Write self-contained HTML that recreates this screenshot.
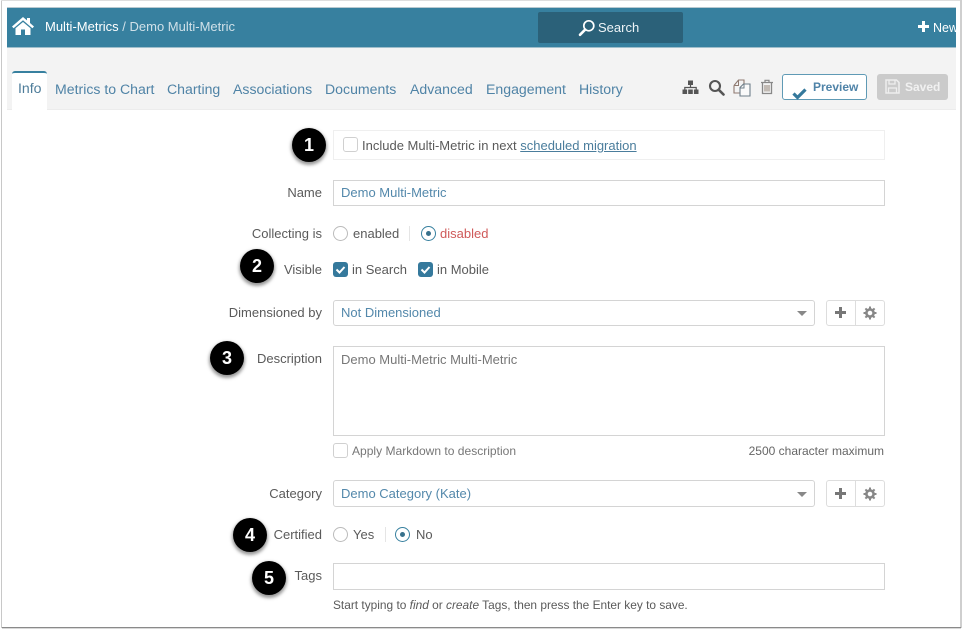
<!DOCTYPE html>
<html><head><meta charset="utf-8">
<style>
html,body{margin:0;padding:0;width:963px;height:630px;overflow:hidden;background:#fff;font-family:"Liberation Sans",sans-serif;}
.a{position:absolute;white-space:nowrap;}
.l{position:absolute;white-space:nowrap;font-size:13px;color:#5a5a5a;line-height:16px;right:641px;text-align:right;}
.t{position:absolute;white-space:nowrap;font-size:14.1px;color:#4f83a6;line-height:18px;top:80px;}
.box{position:absolute;box-sizing:border-box;border:1px solid #d4d4d4;background:#fff;}
.val{position:absolute;white-space:nowrap;font-size:13px;line-height:16px;color:#5388ab;}
.txt{position:absolute;white-space:nowrap;font-size:13px;line-height:16px;color:#5a5a5a;}
.cb{position:absolute;box-sizing:border-box;width:15px;height:15px;border:1px solid #d0d0d0;border-radius:3px;background:#fff;}
.cc{position:absolute;width:15px;height:15px;border-radius:3px;background:#35799c;}
.r{position:absolute;box-sizing:border-box;width:15px;height:15px;border:1px solid #bbb;border-radius:50%;background:#fff;}
.rs{position:absolute;box-sizing:border-box;width:15px;height:15px;border:1.5px solid #37809f;border-radius:50%;background:#fff;}
.rs:after{content:"";position:absolute;left:3.5px;top:3.5px;width:5px;height:5px;border-radius:50%;background:#37718c;}
.n{position:absolute;width:34px;height:34px;border-radius:50%;background:#000;color:#fff;font-size:18px;font-weight:700;line-height:34px;text-align:center;box-shadow:0 2px 3px 1px rgba(70,70,70,.55),0 0 0 1px #fff;}
.btn{position:absolute;box-sizing:border-box;width:59px;height:26px;border:1px solid #ddd;border-radius:3px;background:#fff;}
.btn:after{content:"";position:absolute;left:28px;top:0;width:1px;height:100%;background:#ddd;}
</style></head><body>

<!-- frame -->
<div class="a" style="left:1px;top:0;width:1px;height:628px;background:#c8c8c8;"></div>
<div class="a" style="left:1px;top:0;width:960px;height:1px;background:#dedede;"></div>
<div class="a" style="left:960px;top:0;width:2px;height:628px;background:#cfcfcf;"></div>
<div class="a" style="left:2px;top:627px;width:959px;height:1px;background:#8a8a8a;"></div>
<div class="a" style="left:2px;top:628px;width:959px;height:1px;background:#d8d8d8;"></div>

<!-- header -->
<div class="a" style="left:7px;top:7px;width:949px;height:1px;background:#b9c9d0;"></div>
<div class="a" style="left:7px;top:8px;width:949px;height:39px;background:#37809f;"></div>
<div class="a" style="left:7px;top:47px;width:949px;height:63px;background:#f3f3f3;border-top:1px solid #9fbecb;box-sizing:border-box;"></div>
<div class="a" style="left:7px;top:109px;width:949px;height:1px;background:#ececec;"></div>

<svg class="a" style="left:11px;top:16px" width="24" height="20" viewBox="0 0 24 20"><path d="M12 1 L1 10.5 L2.6 12.3 L12 4.2 L21.4 12.3 L23 10.5 L19 7 V2 H16 V4.4 Z" fill="#fff"/><path d="M4.5 12.2 L12 6 L19.5 12.2 V19 H14 V13.5 H10 V19 H4.5 Z" fill="#fff"/></svg>
<div class="a" style="left:45px;top:19px;font-size:13px;line-height:16px;color:#fff;">Multi-Metrics <span style="color:#cfe0e8">/ Demo Multi-Metric</span></div>

<div class="a" style="left:538px;top:12px;width:145px;height:31px;background:#2b6179;border-radius:2px;"></div>
<svg class="a" style="left:578px;top:19px" width="18" height="18" viewBox="0 0 18 18"><circle cx="10.8" cy="6.8" r="5" fill="none" stroke="#fff" stroke-width="1.7"/><path d="M7.2 10.6 L2 15.8" stroke="#fff" stroke-width="2.6" stroke-linecap="round"/></svg>
<div class="a" style="left:598px;top:20px;font-size:13px;line-height:16px;color:#eef4f7;">Search</div>

<svg class="a" style="left:917px;top:20px" width="13" height="13" viewBox="0 0 13 13"><path d="M6.5 1v11M1 6.5h11" stroke="#fff" stroke-width="3"/></svg>
<div class="a" style="left:933px;top:20px;width:23px;overflow:hidden;font-size:12.5px;line-height:16px;color:#fff;">New</div>

<!-- tabs -->
<div class="a" style="left:12px;top:71px;width:35px;height:39px;background:#fff;border-top:2px solid #37809f;border-radius:3px 3px 0 0;box-sizing:border-box;"></div>
<div class="t" style="left:18px;top:79px;color:#4e7d9a;">Info</div>
<div class="t" style="left:55px;">Metrics to Chart</div>
<div class="t" style="left:167px;">Charting</div>
<div class="t" style="left:233px;">Associations</div>
<div class="t" style="left:325px;">Documents</div>
<div class="t" style="left:410px;">Advanced</div>
<div class="t" style="left:486px;">Engagement</div>
<div class="t" style="left:579px;">History</div>

<!-- toolbar icons -->
<svg class="a" style="left:682px;top:80px" width="17" height="15" viewBox="0 0 17 15"><rect x="6" y="0.5" width="5" height="4.5" fill="#555"/><path d="M8.5 5v3M2.8 10V7.5h11.4V10" fill="none" stroke="#555" stroke-width="1.2"/><rect x="0.5" y="9.5" width="4.6" height="4.5" fill="#555"/><rect x="6.2" y="9.5" width="4.6" height="4.5" fill="#555"/><rect x="11.9" y="9.5" width="4.6" height="4.5" fill="#555"/></svg>
<svg class="a" style="left:708px;top:79px" width="17" height="17" viewBox="0 0 17 17"><circle cx="7" cy="7" r="5" fill="none" stroke="#555" stroke-width="2.1"/><path d="M10.8 10.8 L15.5 15.5" stroke="#555" stroke-width="2.6" stroke-linecap="round"/></svg>
<svg class="a" style="left:733px;top:79px" width="18" height="18" viewBox="0 0 18 18"><path d="M1 6.5 L5.5 1 H11 V5" fill="none" stroke="#8f7a70" stroke-width="1.1"/><path d="M1 6.5 V14 H7" fill="none" stroke="#8f7a70" stroke-width="1.1"/><path d="M1 6.5 H5.5 V1" fill="none" stroke="#8f7a70" stroke-width="1"/><path d="M7 8.5 L10.5 5 H17 V17 H7 Z" fill="#fafafa" stroke="#6f7f8a" stroke-width="1.1"/><path d="M7 9 H11 V5.3" fill="none" stroke="#6f7f8a" stroke-width="1"/></svg>
<svg class="a" style="left:760px;top:79px" width="14" height="16" viewBox="0 0 14 16"><path d="M1 3.5 H13 M5 3 V1.3 H9 V3" fill="none" stroke="#888" stroke-width="1.2"/><path d="M2.5 3.5 V14.5 H11.5 V3.5" fill="none" stroke="#888" stroke-width="1.3"/><path d="M5 6 V12.5 M7 6 V12.5 M9 6 V12.5" stroke="#9a8d80" stroke-width="1.1"/></svg>

<div class="a" style="left:782px;top:74px;width:85px;height:26px;box-sizing:border-box;border:1px solid #5f9ab5;border-radius:3px;background:#fff;"></div>
<svg class="a" style="left:792px;top:87px" width="15" height="13" viewBox="0 0 15 13"><path d="M1.5 6.5 L5.5 10.5 L13.5 2.5" fill="none" stroke="#35799c" stroke-width="3.2"/></svg>
<div class="a" style="left:813px;top:79px;font-size:12px;font-weight:700;line-height:16px;color:#4f83a8;">Preview</div>

<div class="a" style="left:877px;top:74px;width:71px;height:26px;background:#cbcbcb;border-radius:3px;"></div>
<svg class="a" style="left:885px;top:79px" width="15" height="15" viewBox="0 0 15 15"><path d="M1 1 H11.5 L14 3.5 V14 H1 Z" fill="none" stroke="#eee" stroke-width="1.5"/><path d="M4 1.5 V5 H10 V1.5 M3.5 14 V9 H11.5 V14" fill="none" stroke="#eee" stroke-width="1.3"/></svg>
<div class="a" style="left:905px;top:79px;font-size:12px;font-weight:700;line-height:16px;color:#f1f1f1;">Saved</div>

<!-- row 1 -->
<div class="box" style="left:333px;top:130px;width:552px;height:30px;border-color:#efefef;"></div>
<div class="cb" style="left:343px;top:137px;"></div>
<div class="txt" style="left:362px;top:138px;">Include Multi-Metric in next <span style="color:#4a7d9c;text-decoration:underline;">scheduled migration</span></div>

<!-- name -->
<div class="l" style="top:185px;">Name</div>
<div class="box" style="left:333px;top:180px;width:552px;height:26px;"></div>
<div class="val" style="left:341px;top:185px;">Demo Multi-Metric</div>

<!-- collecting -->
<div class="l" style="top:226px;">Collecting is</div>
<div class="r" style="left:333px;top:226px;"></div>
<div class="txt" style="left:353px;top:226px;">enabled</div>
<div class="a" style="left:409px;top:226px;width:1px;height:15px;background:#e5e5e5;"></div>
<div class="rs" style="left:421px;top:226px;"></div>
<div class="txt" style="left:440px;top:226px;color:#cf5a5a;">disabled</div>

<!-- visible -->
<div class="l" style="top:262px;">Visible</div>
<div class="cc" style="left:333px;top:262px;"></div>
<svg class="a" style="left:333px;top:262px" width="15" height="15" viewBox="0 0 15 15"><path d="M3.5 7.5 L6.5 10.5 L11.5 5" fill="none" stroke="#fff" stroke-width="2"/></svg>
<div class="txt" style="left:352px;top:262px;">in Search</div>
<div class="cc" style="left:418px;top:262px;"></div>
<svg class="a" style="left:418px;top:262px" width="15" height="15" viewBox="0 0 15 15"><path d="M3.5 7.5 L6.5 10.5 L11.5 5" fill="none" stroke="#fff" stroke-width="2"/></svg>
<div class="txt" style="left:437px;top:262px;">in Mobile</div>

<!-- dimensioned -->
<div class="l" style="top:305px;">Dimensioned by</div>
<div class="box" style="left:333px;top:300px;width:482px;height:26px;border-radius:3px;"></div>
<div class="val" style="left:341px;top:305px;">Not Dimensioned</div>
<div class="a" style="left:797px;top:311px;width:0;height:0;border-left:5px solid transparent;border-right:5px solid transparent;border-top:5px solid #888;"></div>
<div class="btn" style="left:826px;top:300px;"></div>
<svg class="a" style="left:834px;top:306px" width="13" height="13" viewBox="0 0 13 13"><path d="M6.5 1v11M1 6.5h11" stroke="#777" stroke-width="3"/></svg>
<svg class="a" style="left:863px;top:306px" width="14" height="14" viewBox="0 0 14 14"><circle cx="7" cy="7" r="3.6" fill="none" stroke="#888" stroke-width="2.6"/><path d="M7 .5v3M7 10.5v3M.5 7h3M10.5 7h3M2.4 2.4l2.1 2.1M9.5 9.5l2.1 2.1M2.4 11.6l2.1-2.1M9.5 4.5l2.1-2.1" stroke="#888" stroke-width="2"/></svg>

<!-- description -->
<div class="l" style="top:351px;">Description</div>
<div class="box" style="left:333px;top:346px;width:552px;height:90px;"></div>
<div class="txt" style="left:341px;top:352px;color:#777;">Demo Multi-Metric Multi-Metric</div>
<div class="cb" style="left:333px;top:443px;"></div>
<div class="txt" style="left:352px;top:443px;font-size:12.05px;color:#777;">Apply Markdown to description</div>
<div class="txt" style="right:79px;top:443px;font-size:12px;color:#666;">2500 character maximum</div>

<!-- category -->
<div class="l" style="top:486px;">Category</div>
<div class="box" style="left:333px;top:480px;width:482px;height:27px;border-radius:3px;"></div>
<div class="val" style="left:341px;top:486px;">Demo Category (Kate)</div>
<div class="a" style="left:797px;top:492px;width:0;height:0;border-left:5px solid transparent;border-right:5px solid transparent;border-top:5px solid #888;"></div>
<div class="btn" style="left:826px;top:480px;height:27px;"></div>
<svg class="a" style="left:834px;top:487px" width="13" height="13" viewBox="0 0 13 13"><path d="M6.5 1v11M1 6.5h11" stroke="#777" stroke-width="3"/></svg>
<svg class="a" style="left:863px;top:487px" width="14" height="14" viewBox="0 0 14 14"><circle cx="7" cy="7" r="3.6" fill="none" stroke="#888" stroke-width="2.6"/><path d="M7 .5v3M7 10.5v3M.5 7h3M10.5 7h3M2.4 2.4l2.1 2.1M9.5 9.5l2.1 2.1M2.4 11.6l2.1-2.1M9.5 4.5l2.1-2.1" stroke="#888" stroke-width="2"/></svg>

<!-- certified -->
<div class="l" style="top:527px;">Certified</div>
<div class="r" style="left:333px;top:527px;"></div>
<div class="txt" style="left:353px;top:527px;">Yes</div>
<div class="a" style="left:385px;top:527px;width:1px;height:15px;background:#e5e5e5;"></div>
<div class="rs" style="left:395px;top:527px;"></div>
<div class="txt" style="left:416px;top:527px;">No</div>

<!-- tags -->
<div class="l" style="top:568px;">Tags</div>
<div class="box" style="left:333px;top:563px;width:552px;height:27px;"></div>
<div class="txt" style="left:333px;top:597px;font-size:11.9px;">Start typing to <i>find</i> or <i>create</i> Tags, then press the Enter key to save.</div>

<!-- numbered markers -->
<div class="n" style="left:292px;top:128px;">1</div>
<div class="n" style="left:240px;top:249px;">2</div>
<div class="n" style="left:210px;top:341px;">3</div>
<div class="n" style="left:233px;top:518px;">4</div>
<div class="n" style="left:252px;top:561px;">5</div>

</body></html>
